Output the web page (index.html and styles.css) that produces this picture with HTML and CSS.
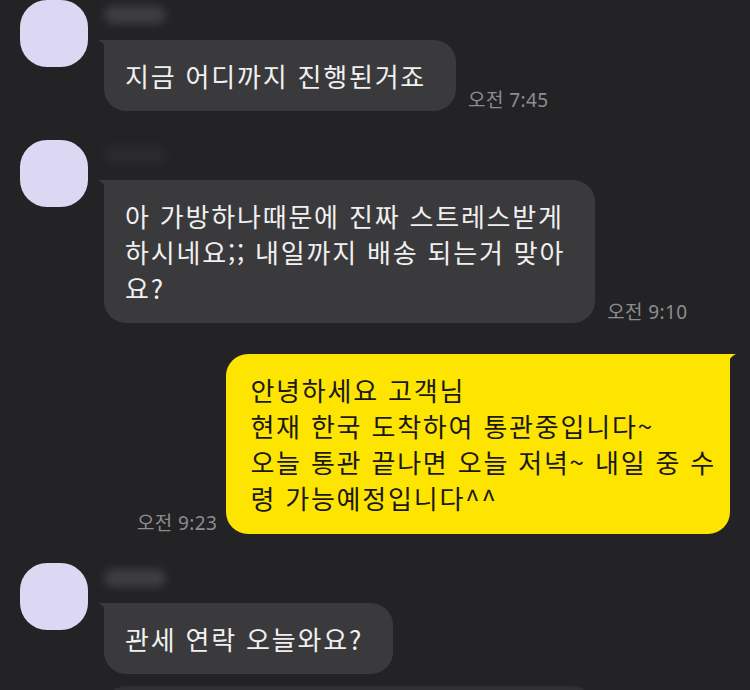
FILE: index.html
```html
<!DOCTYPE html>
<html lang="ko">
<head>
<meta charset="utf-8">
<link rel="stylesheet" href="styles.css">
</head>
<body>
<div class="chat">
  <div class="row-in">
    <div class="avatar"></div>
    <div class="msg">
      <div class="name"><div class="name-blur"></div></div>
      <div class="line">
        <div class="bubble">
          <svg class="tail-l" width="10" height="16" viewBox="0 0 10 16"><path d="M0 0 L10 0 L10 16 C9 8 5 2 0 0 Z"/></svg>
          지금 어디까지 진행된거죠
        </div>
        <div class="time">오전 7:45</div>
      </div>
    </div>
  </div>

  <div class="row-in gap-row">
    <div class="avatar"></div>
    <div class="msg">
      <div class="name"><div class="name-blur faint"></div></div>
      <div class="line">
        <div class="bubble">
          <svg class="tail-l" width="10" height="16" viewBox="0 0 10 16"><path d="M0 0 L10 0 L10 16 C9 8 5 2 0 0 Z"/></svg>
          아 가방하나때문에 진짜 스트레스받게<br>하시네요;; 내일까지 배송 되는거 맞아<br>요?
        </div>
        <div class="time">오전 9:10</div>
      </div>
    </div>
  </div>

  <div class="row-out">
    <div class="time">오전 9:23</div>
    <div class="bubble bubble-me">
      <svg class="tail-r" width="10" height="16" viewBox="0 0 10 16"><path d="M10 0 L0 0 L0 16 C1 8 5 2 10 0 Z"/></svg>
      안녕하세요 고객님<br>현재 한국 도착하여 통관중입니다~<br>오늘 통관 끝나면 오늘 저녁~ 내일 중 수<br>령 가능예정입니다^^
    </div>
  </div>

  <div class="row-in gap-row">
    <div class="avatar"></div>
    <div class="msg">
      <div class="name"><div class="name-blur"></div></div>
      <div class="line">
        <div class="bubble">
          <svg class="tail-l" width="10" height="16" viewBox="0 0 10 16"><path d="M0 0 L10 0 L10 16 C9 8 5 2 0 0 Z"/></svg>
          관세 연락 오늘와요?
        </div>
      </div>
    </div>
  </div>

  <div class="row-cont">
    <div class="bubble bubble-stub"></div>
  </div>
</div>
</body>
</html>
```

FILE: styles.css
```css
html, body {
  margin: 0;
  height: 690px;
  overflow: hidden;
  background: #232325;
}

body {
  font-family: "Noto Sans CJK KR", "Noto Sans", sans-serif;
}

.chat {
  display: flex;
  flex-direction: column;
  padding: 0 20px;
}

.row-in {
  display: flex;
  align-items: flex-start;
  gap: 16px;
}

.gap-row {
  margin-top: 29px;
}

.avatar {
  flex: none;
  width: 68px;
  height: 67px;
  border-radius: 27px;
  background: #dcd8f4;
}

.msg {
  display: flex;
  flex-direction: column;
}

.name {
  height: 40px;
}

.name-blur {
  width: 62px;
  height: 18px;
  margin: 6px 0 0 0;
  border-radius: 10px;
  background: #3e3e41;
  filter: blur(4px);
}

.name-blur.faint {
  background: #2b2b2e;
}

.line {
  display: flex;
  align-items: flex-end;
  gap: 12px;
}

.bubble {
  position: relative;
  background: #3a3a3c;
  color: #f0f0f0;
  font-size: 26px;
  line-height: 36px;
  letter-spacing: 1.8px;
  padding: 17.5px 30px 17.5px 21px;
  border-radius: 22px;
  border-top-left-radius: 3px;
  white-space: nowrap;
}

.tail-l {
  position: absolute;
  left: -6px;
  top: 0;
  fill: #3a3a3c;
}

.time {
  flex: none;
  font-family: "Noto Sans", "Noto Sans CJK KR", sans-serif;
  font-size: 19px;
  line-height: 18px;
  letter-spacing: 0.4px;
  color: #8d8d90;
  margin-bottom: 2px;
  white-space: nowrap;
}

.row-out {
  display: flex;
  justify-content: flex-end;
  align-items: flex-end;
  gap: 9px;
  margin-top: 31px;
}

.bubble-me {
  background: #fee500;
  color: #191919;
  padding: 18px 14px 18px 24px;
  border-top-left-radius: 22px;
  border-top-right-radius: 3px;
}

.tail-r {
  position: absolute;
  right: -6px;
  top: 0;
  fill: #fee500;
}

.row-cont {
  display: flex;
  margin: 12px 0 0 84px;
}

.bubble-stub {
  width: 490px;
  height: 60px;
  padding: 0;
  background: #303032;
  border-top-left-radius: 22px;
}
```
